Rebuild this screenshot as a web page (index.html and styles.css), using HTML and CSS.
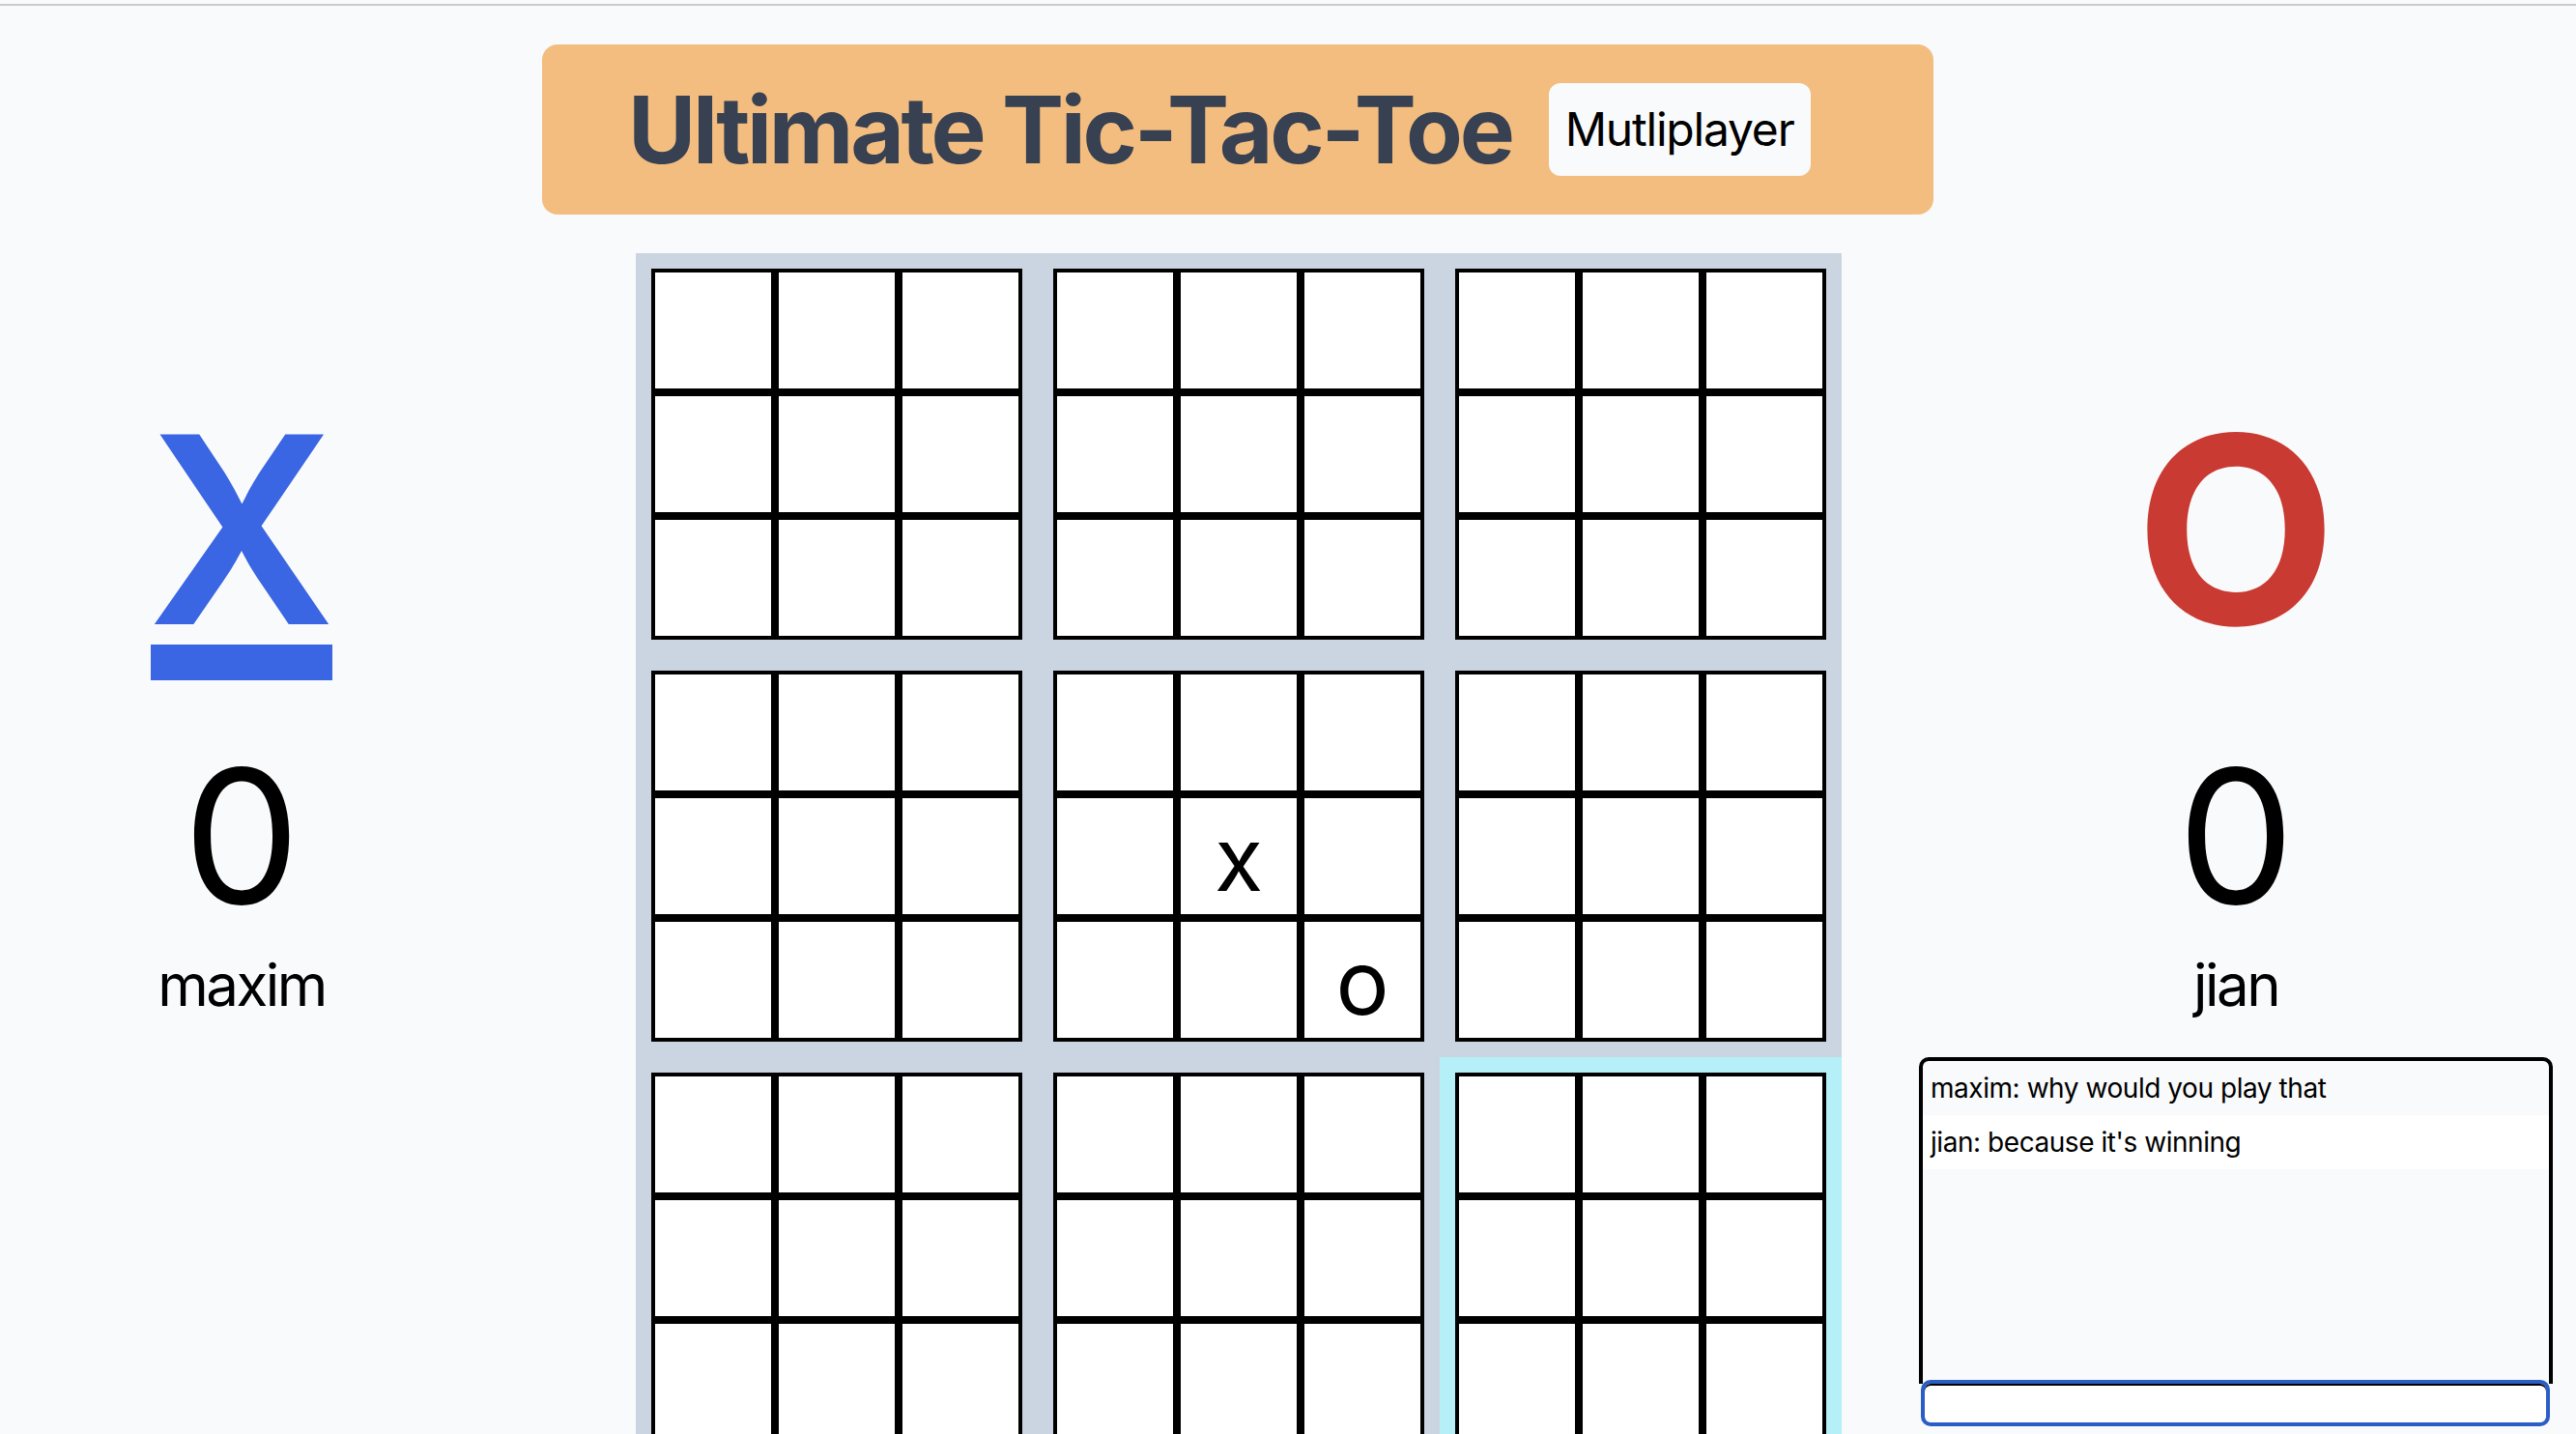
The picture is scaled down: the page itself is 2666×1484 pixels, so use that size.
FILE: index.html
```html
<!DOCTYPE html>
<html lang="en">
<head>
<meta charset="utf-8">
<title>Ultimate Tic-Tac-Toe</title>
<link rel="stylesheet" href="styles.css">
</head>
<body>
<div class="topbar"></div>
<header class="title-bar">
  <h1 class="title">Ultimate Tic-Tac-Toe</h1>
  <span class="badge">Mutliplayer</span>
</header>
<main class="game">
  <section class="player player-left">
    <div class="mark mark-x current">X</div>
    <div class="score">0</div>
    <div class="name">maxim</div>
  </section>

  <div class="board">
    <div class="sub"><div class="mini">
      <div class="cell"></div><div class="cell"></div><div class="cell"></div>
      <div class="cell"></div><div class="cell"></div><div class="cell"></div>
      <div class="cell"></div><div class="cell"></div><div class="cell"></div>
    </div></div>
    <div class="sub"><div class="mini">
      <div class="cell"></div><div class="cell"></div><div class="cell"></div>
      <div class="cell"></div><div class="cell"></div><div class="cell"></div>
      <div class="cell"></div><div class="cell"></div><div class="cell"></div>
    </div></div>
    <div class="sub"><div class="mini">
      <div class="cell"></div><div class="cell"></div><div class="cell"></div>
      <div class="cell"></div><div class="cell"></div><div class="cell"></div>
      <div class="cell"></div><div class="cell"></div><div class="cell"></div>
    </div></div>
    <div class="sub"><div class="mini">
      <div class="cell"></div><div class="cell"></div><div class="cell"></div>
      <div class="cell"></div><div class="cell"></div><div class="cell"></div>
      <div class="cell"></div><div class="cell"></div><div class="cell"></div>
    </div></div>
    <div class="sub"><div class="mini">
      <div class="cell"></div><div class="cell"></div><div class="cell"></div>
      <div class="cell"></div><div class="cell">x</div><div class="cell"></div>
      <div class="cell"></div><div class="cell"></div><div class="cell">o</div>
    </div></div>
    <div class="sub"><div class="mini">
      <div class="cell"></div><div class="cell"></div><div class="cell"></div>
      <div class="cell"></div><div class="cell"></div><div class="cell"></div>
      <div class="cell"></div><div class="cell"></div><div class="cell"></div>
    </div></div>
    <div class="sub"><div class="mini">
      <div class="cell"></div><div class="cell"></div><div class="cell"></div>
      <div class="cell"></div><div class="cell"></div><div class="cell"></div>
      <div class="cell"></div><div class="cell"></div><div class="cell"></div>
    </div></div>
    <div class="sub"><div class="mini">
      <div class="cell"></div><div class="cell"></div><div class="cell"></div>
      <div class="cell"></div><div class="cell"></div><div class="cell"></div>
      <div class="cell"></div><div class="cell"></div><div class="cell"></div>
    </div></div>
    <div class="sub sub-active"><div class="mini">
      <div class="cell"></div><div class="cell"></div><div class="cell"></div>
      <div class="cell"></div><div class="cell"></div><div class="cell"></div>
      <div class="cell"></div><div class="cell"></div><div class="cell"></div>
    </div></div>
  </div>

  <section class="player player-right">
    <div class="mark mark-o">O</div>
    <div class="score">0</div>
    <div class="name">jian</div>
    <div class="chat">
      <div class="chat-log">
        <div class="msg">maxim: why would you play that</div>
        <div class="msg msg-alt">jian: because it's winning</div>
      </div>
      <input class="chat-input" type="text" aria-label="Chat message">
    </div>
  </section>
</main>
</body>
</html>
```

FILE: styles.css
```css
html, body {
  margin: 0;
  padding: 0;
}

body {
  background: #f9fafb;
  font-family: Inter, "Noto Sans", "Liberation Sans", sans-serif;
  color: #000;
  overflow: hidden;
}

.topbar {
  height: 4px;
  border-bottom: 2px solid #c9cacd;
}

.title-bar {
  margin: 40px 0 0 561px;
  width: 1440px;
  height: 176px;
  box-sizing: border-box;
  background: #f3bd80;
  border-radius: 16px;
  display: flex;
  align-items: center;
  padding-left: 89px;
  gap: 38px;
}

.title {
  margin: 0;
  font-size: 96px;
  line-height: 96px;
  font-weight: 700;
  color: #374151;
  letter-spacing: -0.034em;
}

.badge {
  background: #f9fafb;
  border-radius: 12px;
  padding: 16px 17px;
  font-size: 48px;
  line-height: 64px;
  font-weight: 400;
  letter-spacing: -0.025em;
  color: #000;
}

.game {
  display: flex;
  align-items: flex-start;
  margin-top: 40px;
}

.player {
  display: flex;
  flex-direction: column;
  align-items: center;
  flex: none;
  padding-top: 167px;
}

.player-left {
  width: 500px;
}

.player-right {
  width: 656px;
  margin-left: 80px;
}

.mark {
  width: 188px;
  display: flex;
  justify-content: center;
  font-size: 270px;
  line-height: 238px;
  font-weight: 700;
  border-bottom: 37px solid transparent;
}

.mark-x {
  color: #3a65e3;
  font-weight: 600;
}

.mark-o {
  color: #c93a32;
}

.mark.current {
  border-bottom-color: currentColor;
}

.score {
  font-size: 192px;
  line-height: 192px;
  margin-top: 65px;
}

.name {
  font-size: 60px;
  line-height: 72px;
  margin-top: 22px;
  letter-spacing: -2.5px;
}

.board {
  margin-left: 158px;
  flex: none;
  display: grid;
  grid-template-columns: repeat(3, 416px);
  background: #cbd5e1;
}

.sub {
  padding: 16px;
}

.sub-active {
  background: #b5f0f8;
}

.mini {
  display: grid;
  grid-template-columns: repeat(3, 128px);
  grid-auto-rows: 128px;
}

.cell {
  box-sizing: border-box;
  border: 4px solid #000;
  background: #fff;
  display: flex;
  align-items: center;
  justify-content: center;
  font-size: 92px;
  line-height: 1;
  padding-top: 6px;
}

.chat {
  margin-top: 39px;
  width: 656px;
}

.chat-log {
  height: 334px;
  border: 4px solid #000;
  border-bottom: 0;
  border-radius: 10px 10px 0 0;
}

.msg {
  padding: 8px;
  font-size: 28px;
  line-height: 40px;
  letter-spacing: -0.45px;
}

.msg-alt {
  background: #fff;
}

.chat-input {
  display: block;
  width: 651px;
  height: 48px;
  box-sizing: border-box;
  margin: -4px 0 0 2px;
  padding: 0;
  border: 4px solid #2a5ec6;
  border-radius: 10px;
  background: #fff;
  box-shadow: inset 0 2px 0 #000;
  outline: none;
}
```
